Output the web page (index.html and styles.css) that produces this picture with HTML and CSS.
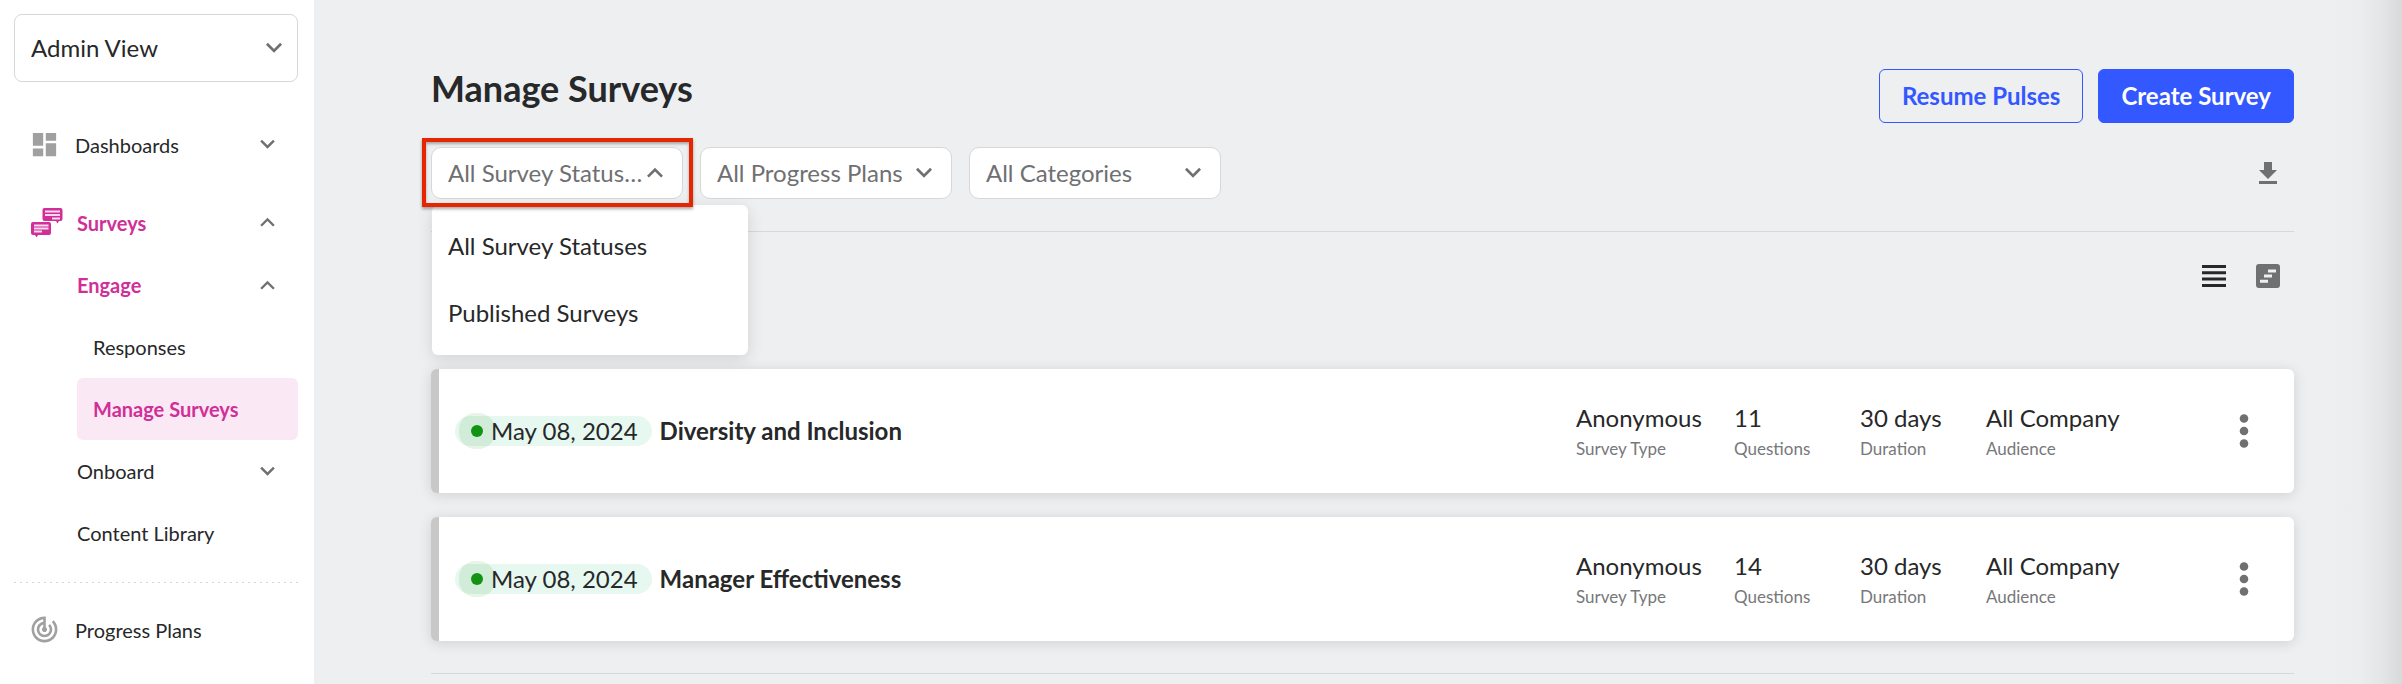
FILE: index.html
```html
<!DOCTYPE html>
<html lang="en">
<head>
  <meta charset="UTF-8">
  <meta name="viewport" content="width=device-width, initial-scale=1.0">
  <title>Manage Surveys</title>
  <link rel="stylesheet" href="styles.css">
</head>
<body>

  <!-- shared icons -->
  <svg class="icon-defs" aria-hidden="true">
    <symbol id="icon-down" viewBox="0 0 24 24"><path d="M7.41 8.09 12 12.67l4.59-4.58L18 9.5l-6 6-6-6z"/></symbol>
    <symbol id="icon-up" viewBox="0 0 24 24"><path d="M7.41 15.41 12 10.83l4.59 4.58L18 14l-6-6-6 6z"/></symbol>
    <symbol id="icon-more" viewBox="0 0 34 34"><circle cx="17" cy="4.5" r="4.3"/><circle cx="17" cy="17" r="4.3"/><circle cx="17" cy="29.5" r="4.3"/></symbol>
  </svg>

  <div class="app">
    <aside class="sidebar">
      <div class="select-box view-select">
        <select aria-label="View">
          <option>Admin View</option>
        </select>
        <svg class="chevron"><use href="#icon-down"/></svg>
      </div>

      <nav class="nav">
        <a class="nav-item" href="#">
          <span class="nav-icon">
            <svg width="31" height="31" viewBox="0 0 24 24"><path d="M3 13h8V3H3v10zm0 8h8v-6H3v6zm10 0h8V11h-8v10zm0-18v6h8V3h-8z"/></svg>
          </span>
          <span class="nav-label">Dashboards</span>
          <svg class="chevron"><use href="#icon-down"/></svg>
        </a>

        <div class="nav-group">
          <a class="nav-item current" href="#">
            <span class="nav-icon">
              <svg width="32" height="30" viewBox="0 0 32 30">
                <path class="bubble" d="M13.500 0H29.500Q31.500 0 31.500 2V11Q31.500 13 29.500 13H28L26.500 15.500 25 13H13.500Q11.500 13 11.500 11V2Q11.500 0 13.500 0z"/>
                <path class="bubble-line" d="M14 3.500H29M14 7H29M21 10.500H29"/>
                <path class="bubble" d="M2 14H18Q20 14 20 16V25Q20 27 18 27H7L5.500 29.500 4 27H2Q0 27 0 25V16Q0 14 2 14z"/>
                <path class="bubble-line" d="M3 17.500H17.500M3 20.500H17.500M3 23.500H11"/>
              </svg>
            </span>
            <span class="nav-label">Surveys</span>
            <svg class="chevron"><use href="#icon-up"/></svg>
          </a>
          <div class="subnav">
            <a class="nav-item current" href="#">
              <span class="nav-label">Engage</span>
              <svg class="chevron"><use href="#icon-up"/></svg>
            </a>
            <a class="nav-item nested" href="#"><span class="nav-label">Responses</span></a>
            <a class="nav-item nested current selected" href="#"><span class="nav-label">Manage Surveys</span></a>
            <a class="nav-item" href="#">
              <span class="nav-label">Onboard</span>
              <svg class="chevron"><use href="#icon-down"/></svg>
            </a>
            <a class="nav-item" href="#"><span class="nav-label">Content Library</span></a>
          </div>
        </div>

        <hr class="nav-divider">

        <a class="nav-item" href="#">
          <span class="nav-icon">
            <svg width="31" height="31" viewBox="0 0 24 24"><path d="M19.070 4.930l-1.410 1.410C19.100 7.790 20 9.790 20 12c0 4.420-3.580 8-8 8s-8-3.580-8-8c0-4.080 3.050-7.440 7-7.930v2.020C8.160 6.570 6 9.030 6 12c0 3.310 2.690 6 6 6s6-2.690 6-6c0-1.660-.67-3.160-1.760-4.240l-1.410 1.410C15.550 9.900 16 10.900 16 12c0 2.210-1.790 4-4 4s-4-1.790-4-4c0-1.860 1.280-3.410 3-3.860v2.140c-.6.350-1 .980-1 1.720 0 1.100.9 2 2 2s2-.9 2-2c0-.740-.4-1.380-1-1.720V2h-1C6.480 2 2 6.480 2 12s4.480 10 10 10 10-4.480 10-10c0-2.760-1.120-5.260-2.930-7.070z"/></svg>
          </span>
          <span class="nav-label">Progress Plans</span>
        </a>
      </nav>
    </aside>

    <main class="main">
      <header class="page-header">
        <h1>Manage Surveys</h1>
        <div class="actions">
          <button class="btn btn-outline" type="button">Resume Pulses</button>
          <button class="btn btn-primary" type="button">Create Survey</button>
        </div>
      </header>

      <div class="toolbar">
        <div class="filters">
          <div class="select-box filter highlighted">
            <select aria-label="Survey status">
              <option>All Survey Statuses</option>
              <option>Published Surveys</option>
            </select>
            <svg class="chevron"><use href="#icon-up"/></svg>
            <ul class="menu">
              <li>All Survey Statuses</li>
              <li>Published Surveys</li>
            </ul>
          </div>
          <div class="select-box filter">
            <select aria-label="Progress plan">
              <option>All Progress Plans</option>
            </select>
            <svg class="chevron"><use href="#icon-down"/></svg>
          </div>
          <div class="select-box filter">
            <select aria-label="Category">
              <option>All Categories</option>
            </select>
            <svg class="chevron"><use href="#icon-down"/></svg>
          </div>
        </div>
        <button class="icon-btn" type="button" aria-label="Download">
          <svg width="18" height="22" viewBox="0 0 18 22"><path d="M5 0h8v8h5l-9 9-9-9h5zM0 19h18v3H0z"/></svg>
        </button>
      </div>

      <div class="view-switch">
        <button class="icon-btn dark" type="button" aria-label="List view">
          <svg width="24" height="22" viewBox="0 0 24 22"><path d="M0 0h24v3H0zM0 6.300h24v3H0zM0 12.600h24v3H0zM0 19h24v3H0z"/></svg>
        </button>
        <button class="icon-btn" type="button" aria-label="Timeline view">
          <svg width="24" height="24" viewBox="0 0 24 24"><path fill-rule="evenodd" d="M3 0h18a3 3 0 0 1 3 3v18a3 3 0 0 1-3 3H3a3 3 0 0 1-3-3V3a3 3 0 0 1 3-3zM12 5.500v3h8v-3zM8 10.500v3h8v-3zM4 15.700v3h8v-3z"/></svg>
        </button>
      </div>

      <section class="survey-list">
        <article class="survey-card">
          <span class="date-pill"><i class="status-dot"></i>May 08, 2024</span>
          <h2>Diversity and Inclusion</h2>
          <dl class="facts">
            <div class="fact fact-type"><dd>Anonymous</dd><dt>Survey Type</dt></div>
            <div class="fact"><dd>11</dd><dt>Questions</dt></div>
            <div class="fact"><dd>30 days</dd><dt>Duration</dt></div>
            <div class="fact fact-audience"><dd>All Company</dd><dt>Audience</dt></div>
          </dl>
          <button class="icon-btn" type="button" aria-label="More options">
            <svg width="34" height="34"><use href="#icon-more"/></svg>
          </button>
        </article>

        <article class="survey-card">
          <span class="date-pill"><i class="status-dot"></i>May 08, 2024</span>
          <h2>Manager Effectiveness</h2>
          <dl class="facts">
            <div class="fact fact-type"><dd>Anonymous</dd><dt>Survey Type</dt></div>
            <div class="fact"><dd>14</dd><dt>Questions</dt></div>
            <div class="fact"><dd>30 days</dd><dt>Duration</dt></div>
            <div class="fact fact-audience"><dd>All Company</dd><dt>Audience</dt></div>
          </dl>
          <button class="icon-btn" type="button" aria-label="More options">
            <svg width="34" height="34"><use href="#icon-more"/></svg>
          </button>
        </article>
      </section>
    </main>
  </div>

</body>
</html>
```

FILE: styles.css
```css
* {
  box-sizing: border-box;
}

body {
  margin: 0;
  font-family: Lato, sans-serif;
  font-size: 24px;
  line-height: 30px;
  color: #272829;
  background: #edeff1;
}

button, select {
  font: inherit;
  color: inherit;
}

svg {
  display: block;
  fill: currentColor;
}

.icon-defs {
  position: absolute;
  width: 0;
  height: 0;
}

.app {
  display: flex;
  min-height: 100vh;
}

/* Sidebar */
.sidebar {
  flex: 0 0 314px;
  padding: 14px 16px 0 14px;
  background: #fff;
}

.select-box {
  position: relative;
}

.select-box select {
  display: block;
  width: 100%;
  appearance: none;
  border: 1px solid #d6d7d8;
  background: #fff;
  text-overflow: ellipsis;
  outline: none;
}

.select-box .chevron {
  position: absolute;
  top: 50%;
  right: 8px;
  width: 32px;
  height: 32px;
  margin-top: -16px;
  color: #6f7072;
  pointer-events: none;
}

.view-select select {
  height: 68px;
  padding: 0 40px 0 16px;
  border-radius: 8px;
}

.nav {
  padding-top: 31px;
  font-size: 20px;
}

.nav-item {
  display: flex;
  align-items: center;
  height: 63px;
  padding-right: 16px;
  color: inherit;
  text-decoration: none;
}

.nav-icon {
  display: flex;
  justify-content: center;
  flex: 0 0 61px;
  color: #a0a0a0;
}

.nav-label {
  flex: 1;
}

.nav-item .chevron {
  width: 29px;
  height: 29px;
  color: #6f7072;
}

.current {
  color: #d12f98;
  font-weight: bold;
}

.current .nav-icon {
  color: #d12f98;
}

.bubble-line {
  fill: none;
  stroke: #fbd9ee;
  stroke-width: 2;
}

.nav-group {
  margin: 15px 0 0 2px;
}

.subnav {
  margin-left: 61px;
}

.subnav .nav-item {
  height: 62px;
}

.nested {
  padding-left: 16px;
}

.selected {
  background: #fae9f4;
  border-radius: 6px;
}

.nav-divider {
  height: 1px;
  margin: 18px 0 15px;
  border: 0;
  background: repeating-linear-gradient(90deg, #d4d5d6 0 2px, transparent 2px 6px);
}

/* Main */
.main {
  flex: 1;
  min-width: 0;
  padding: 69px 108px 0 117px;
  background: linear-gradient(270deg, #d8d9db, #e4e5e7 20px, #ebedef 42px, #edeff1 76px);
}

.page-header {
  display: flex;
  align-items: flex-start;
  justify-content: space-between;
}

h1 {
  margin: 0;
  font-size: 36px;
  line-height: 38px;
}

.actions {
  display: flex;
  gap: 15px;
}

.btn {
  height: 54px;
  padding: 0 22px;
  border: 1px solid #3458ff;
  border-radius: 6px;
  font-weight: bold;
}

.btn-outline {
  background: transparent;
  color: #3458ff;
}

.btn-primary {
  background: #3458ff;
  color: #fff;
}

.toolbar {
  display: flex;
  align-items: center;
  justify-content: space-between;
  padding: 24px 17px 32px 0;
  border-bottom: 1px solid #d6d8da;
}

.filters {
  display: flex;
  gap: 17px;
}

.filter {
  width: 252px;
}

.filter select {
  height: 52px;
  padding: 0 36px 0 16px;
  border-radius: 10px;
  color: #6f7072;
}

.filter .chevron {
  right: 12px;
}

/* Red callout frame round the open filter */
.highlighted::after {
  content: "";
  position: absolute;
  inset: -9px -10px -8px -9px;
  z-index: 3;
  border: 4px solid #e52600;
  box-shadow: 0 2px 3px rgba(0, 0, 0, 0.35), inset 0 2px 3px rgba(0, 0, 0, 0.3);
  pointer-events: none;
}

.menu {
  position: absolute;
  top: 58px;
  left: 1px;
  z-index: 2;
  width: 316px;
  margin: 0;
  padding: 8px 0;
  list-style: none;
  background: #fff;
  border-radius: 6px;
  box-shadow: 0 4px 16px rgba(0, 0, 0, 0.12);
}

.menu li {
  padding: 18px 16px 19px;
}

.icon-btn {
  display: flex;
  padding: 0;
  border: 0;
  background: none;
  color: #6f7072;
}

.icon-btn.dark {
  color: #272829;
}

.view-switch {
  display: flex;
  align-items: center;
  justify-content: flex-end;
  gap: 30px;
  padding: 32px 14px 81px 0;
}

/* Surveys */
.survey-list {
  display: flex;
  flex-direction: column;
  gap: 24px;
  padding-bottom: 32px;
  border-bottom: 1px solid #d6d8da;
}

.survey-card {
  display: flex;
  align-items: center;
  height: 124px;
  padding: 0 33px 0 16px;
  background: #fff;
  border-left: 8px solid #c8c8c8;
  border-radius: 6px;
  box-shadow: 0 2px 14px rgba(0, 0, 0, 0.13);
}

.date-pill {
  display: flex;
  align-items: center;
  height: 30px;
  padding: 0 14px 0 16px;
  border-radius: 15px;
  background: #e7f8f0;
}

.status-dot {
  width: 12px;
  height: 12px;
  margin-right: 8px;
  border-radius: 50%;
  background: #129412;
  box-shadow: 0 0 0 12px rgba(18, 148, 18, 0.1);
}

h2 {
  flex: 1;
  margin: 0 0 0 8px;
  font-size: 24px;
}

.facts {
  display: flex;
  margin: 0;
  padding-top: 2px;
}

.fact {
  display: flex;
  flex-direction: column;
  gap: 4px;
  width: 126px;
}

.fact-type {
  width: 158px;
}

.fact-audience {
  width: 241px;
}

.fact dd {
  margin: 0;
}

.fact dt {
  font-size: 17px;
  line-height: 24px;
  color: #77787a;
}
```
